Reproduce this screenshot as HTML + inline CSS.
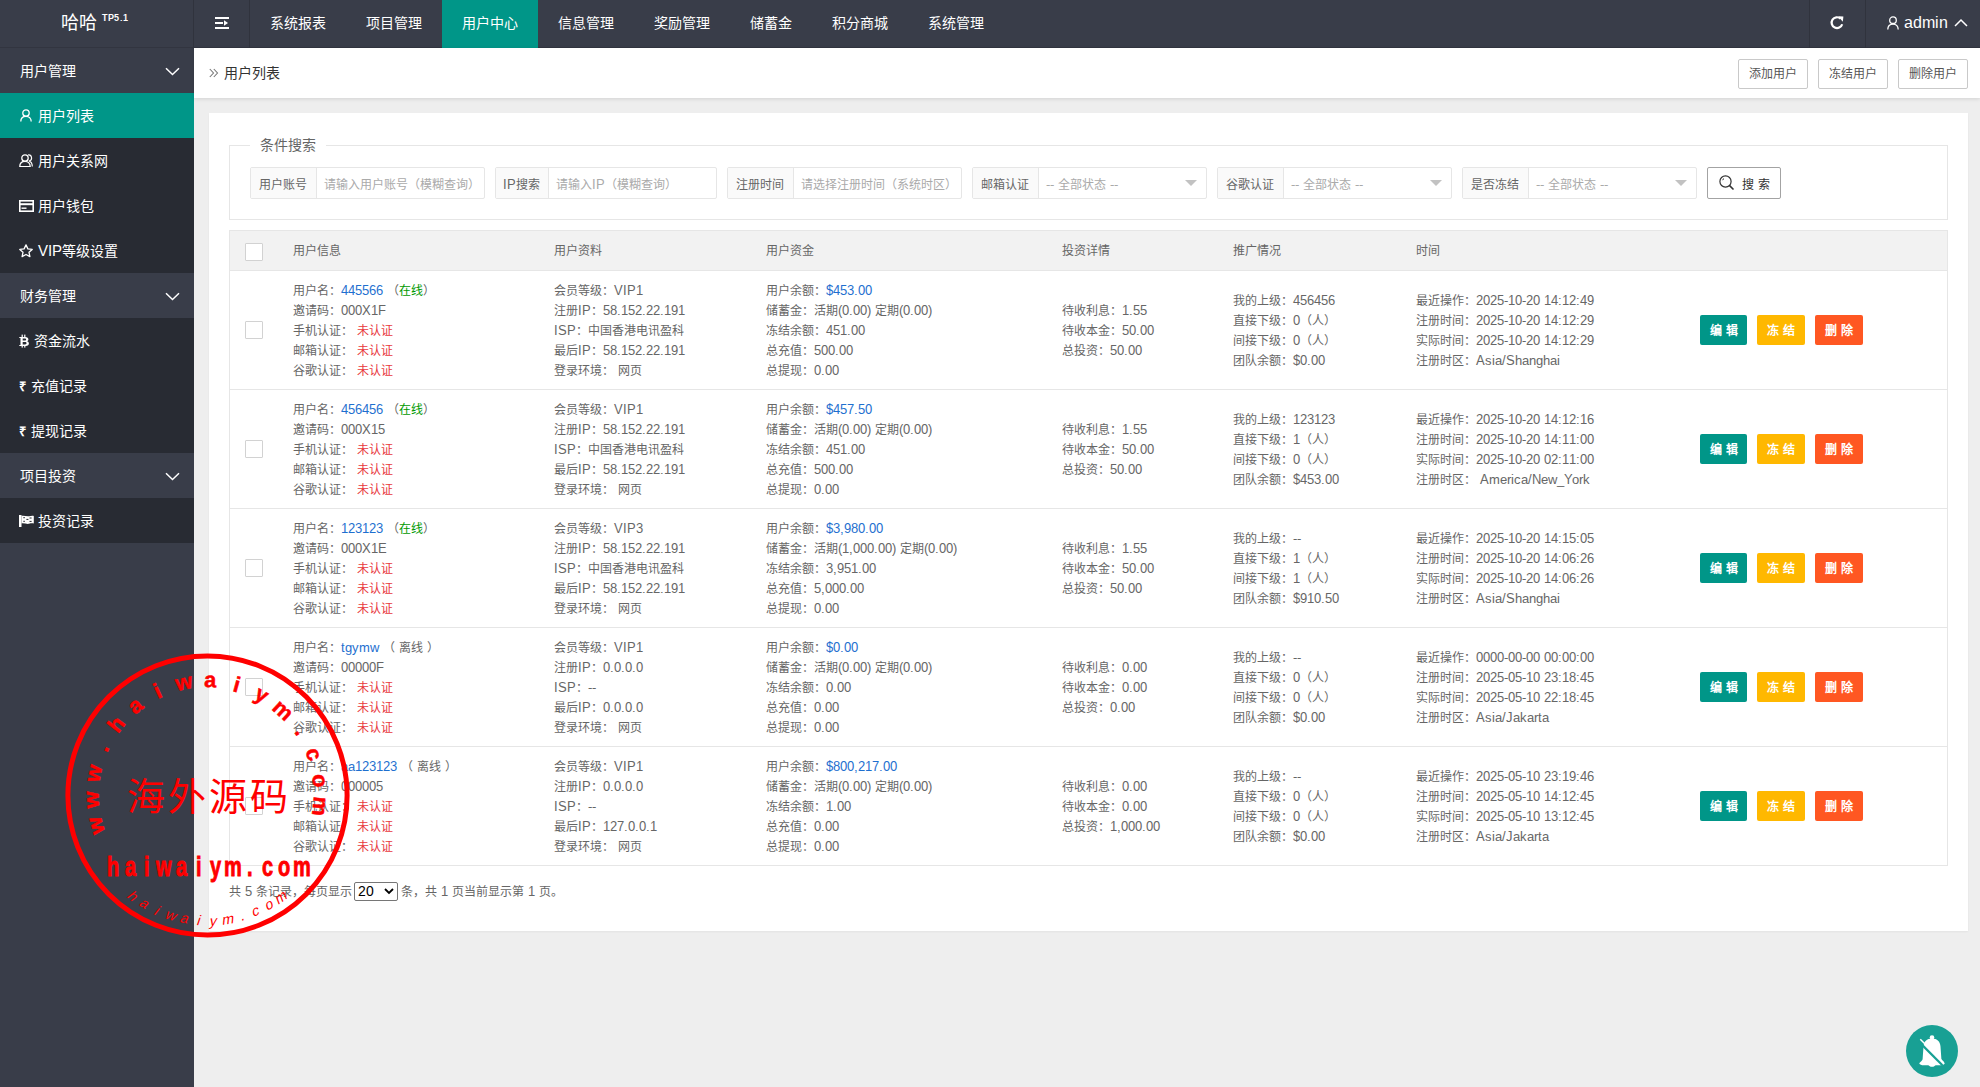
<!DOCTYPE html>
<html lang="zh-CN"><head><meta charset="utf-8"><title>用户列表</title>
<style>
@font-face{font-family:"Liberation Sans";src:local("Liberation Sans"),local("LiberationSans-Regular"),local("LiberationSans");size-adjust:106%;}
@font-face{font-family:"Liberation Sans";font-weight:bold;src:local("Liberation Sans Bold"),local("LiberationSans-Bold");size-adjust:106%;}
*{box-sizing:border-box;margin:0;padding:0}
html,body{width:1980px;height:1087px;overflow:hidden}
body{position:relative;background:#EEEEEE;font-family:"Liberation Sans",sans-serif;font-size:12px;color:#666;}
.abs{position:absolute}
/* header */
#hdr{position:absolute;left:0;top:0;width:1980px;height:48px;background:#393D49;box-shadow:inset 0 -1px 0 rgba(0,0,0,.12)}
#logo{position:absolute;left:0;top:0;width:194px;height:48px;color:#fff;}
#logo .t{position:absolute;left:61px;top:11px;font-size:18px;line-height:24px;}
#logo sup{position:absolute;left:102px;top:13px;font-size:8.5px;line-height:10px;font-weight:bold;letter-spacing:0.2px}
.tnav{position:absolute;top:0;height:48px;line-height:46px;font-size:14px;color:#fff;padding:0 20px;white-space:nowrap}
.tnav.on{background:#009688}
.vsep{position:absolute;top:0;width:1px;height:48px;background:#30333d}
/* sidebar */
#side{position:absolute;left:0;top:48px;width:194px;height:1039px;background:#393D49;}
.si{position:absolute;left:0;width:194px;height:45px;line-height:47px;font-size:14px;color:#fff;padding-left:20px;white-space:nowrap}
.si.p{background:#393D49}
.si.c{background:#282B33}
.si.on{background:#009688}
.chev{position:absolute;left:164.5px;top:18.5px;width:15px;height:9px}
/* breadcrumb */
#bc{position:absolute;left:194px;top:48px;width:1786px;height:50px;background:#fff;box-shadow:0 1px 4px rgba(0,0,0,.12)}
#bc .txt{position:absolute;left:30px;top:15px;font-size:14px;line-height:20px;color:#333}
.tbtn{position:absolute;top:11px;height:30px;width:70px;border:1px solid #C9C9C9;border-radius:2px;background:#fff;font-size:12px;line-height:28px;text-align:center;color:#555}
/* card */
#card{position:absolute;left:209px;top:113px;width:1759px;height:818px;background:#fff;box-shadow:0 1px 2px rgba(0,0,0,.05)}
#fs{position:absolute;left:229px;top:145px;width:1719px;height:75px;border:1px solid #E6E6E6}
#legend{position:absolute;left:250px;top:135px;width:76px;height:20px;background:#fff;font-size:14px;line-height:20px;color:#666;padding-left:10px}
.ig{position:absolute;top:167px;height:32px;border:1px solid #E6E6E6;border-radius:2px;background:#fff}
.ig .lb{position:absolute;left:0;top:0;height:30px;background:#FAFAFA;border-right:1px solid #E6E6E6;line-height:33px;font-size:12px;color:#666;text-align:center;padding-right:2px}
.ig .ph{position:absolute;top:0;height:30px;line-height:33px;margin-left:-1px;font-size:12px;color:#AAA;white-space:nowrap}
.ig .ar{position:absolute;top:12px;width:0;height:0;border-left:6px solid transparent;border-right:6px solid transparent;border-top:6px solid #C2C2C2}
#sbtn{position:absolute;left:1707px;top:167px;width:74px;height:32px;border:1px solid #A3A3A3;border-radius:2px;background:#fff}
/* table */
#tbl{position:absolute;left:229px;top:230px;width:1719px;height:636px;border:1px solid #E6E6E6;}
#thead{position:absolute;left:0;top:0;width:1717px;height:40px;background:#F2F2F2;border-bottom:1px solid #E6E6E6}
.th{position:absolute;top:0;line-height:39px;font-size:12px;color:#666}
.row{position:absolute;left:0;width:1717px;height:119px;border-bottom:1px solid #E6E6E6}
.row .c{position:absolute;top:1px;height:118px;display:flex;flex-direction:column;justify-content:center;line-height:20px;white-space:nowrap;font-size:12px;color:#666}
.cb{position:absolute;width:18px;height:18px;border:1px solid #D2D2D2;background:#fff;border-radius:1px}
.b{color:#1E6FCF}
.g{color:#009900}
.r{color:#E8383D}
.ops{position:absolute;left:1470px;top:44px;height:30px;white-space:nowrap}
.btn{position:absolute;top:0;height:30px;line-height:32px;font-size:12px;color:#fff;font-weight:bold;text-align:center;border-radius:2px}
.btn.teal{left:0;width:47px;background:#009688}
.btn.yel{left:57px;width:48px;background:#FFB800}
.btn.red{left:115px;width:48px;background:#FF5722}
#pg{position:absolute;left:229px;top:882px;line-height:20px;font-size:12px;color:#666;white-space:nowrap}
#sel{display:inline-block;vertical-align:top;width:44px;height:19px;border:1px solid #767676;border-radius:2px;margin:0 -1px 0 -2px;position:relative;color:#000;font-size:13px;line-height:17px;padding-left:3px;background:#fff}
#bell{position:absolute;left:1906px;top:1025px;width:52px;height:52px;border-radius:50%;background:#18A094}

</style></head><body>
<div id="hdr">
 <div id="logo"><span class="t">哈哈</span><sup>TP5.1</sup></div>
 <div class="vsep" style="left:193px"></div>
 <svg class="abs" style="left:215px;top:17px" width="15" height="12" viewBox="0 0 15 12"><rect x="0" y="0" width="14" height="2" fill="#fff"/><rect x="0" y="5" width="8" height="2" fill="#fff"/><path d="M9 3.2 L13 6 L9 8.8 Z" fill="#fff"/><rect x="0" y="10" width="14" height="2" fill="#fff"/></svg>
 <div class="vsep" style="left:249px"></div>
 <div class="tnav" style="left:250px">系统报表</div>
 <div class="tnav" style="left:346px">项目管理</div>
 <div class="tnav on" style="left:442px">用户中心</div>
 <div class="tnav" style="left:538px">信息管理</div>
 <div class="tnav" style="left:634px">奖励管理</div>
 <div class="tnav" style="left:730px">储蓄金</div>
 <div class="tnav" style="left:812px">积分商城</div>
 <div class="tnav" style="left:908px">系统管理</div>
 <div class="vsep" style="left:1809px"></div>
 <svg class="abs" style="left:1829px;top:15px" width="16" height="16" viewBox="0 0 16 16"><path d="M13.2 9.2 A5.4 5.4 0 1 1 11.6 3.6" fill="none" stroke="#fff" stroke-width="2.2"/><path d="M9.2 1.2 L14.4 1.6 L13.8 6.8 Z" fill="#fff"/></svg>
 <div class="vsep" style="left:1865px"></div>
 <svg class="abs" style="left:1887px;top:16px" width="12" height="14" viewBox="0 0 12 14"><circle cx="6" cy="4.2" r="3.3" fill="none" stroke="#fff" stroke-width="1.3"/><path d="M0.8 13.6 C0.8 10 3 8.1 6 8.1 C9 8.1 11.2 10 11.2 13.6" fill="none" stroke="#fff" stroke-width="1.3"/></svg>
 <div class="abs" style="left:1904px;top:11px;font-size:14.8px;line-height:24px;color:#fff">admin</div>
 <svg class="abs" style="left:1954px;top:18px" width="14" height="9" viewBox="0 0 14 9"><path d="M1 8 L7 2 L13 8" fill="none" stroke="#fff" stroke-width="1.5"/></svg>
</div>

<div id="side">
 <div class="si p" style="top:0">用户管理<svg class="chev" viewBox="0 0 15 9"><path d="M1 1.2 L7.5 7.5 L14 1.2" fill="none" stroke="#fff" stroke-width="1.5"/></svg></div>
 <div class="si on" style="top:45px"><svg class="abs" style="left:20px;top:16px" width="12" height="13" viewBox="0 0 12 13"><circle cx="6" cy="4" r="3.2" fill="none" stroke="#fff" stroke-width="1.3"/><path d="M0.8 12.6 C0.8 9.2 3 7.4 6 7.4 C9 7.4 11.2 9.2 11.2 12.6" fill="none" stroke="#fff" stroke-width="1.3"/></svg><span style="position:absolute;left:38px">用户列表</span></div>
 <div class="si c" style="top:90px"><svg class="abs" style="left:19px;top:16px" width="14" height="13" viewBox="0 0 14 13"><circle cx="6" cy="4" r="3.2" fill="none" stroke="#fff" stroke-width="1.3"/><path d="M0.8 12.6 C0.8 9.2 3 7.4 6 7.4 C9 7.4 11.2 9.2 11.2 12.6 Z" fill="none" stroke="#fff" stroke-width="1.3"/><path d="M9 1 A3 3 0 0 1 10 7 C12 7.6 13.3 9.5 13.3 12.6" fill="none" stroke="#fff" stroke-width="1.2"/></svg><span style="position:absolute;left:38px">用户关系网</span></div>
 <div class="si c" style="top:135px"><svg class="abs" style="left:19px;top:17px" width="15" height="12" viewBox="0 0 15 12"><rect x="0.8" y="0.8" width="13.4" height="10.4" fill="none" stroke="#fff" stroke-width="1.6"/><rect x="0.8" y="3.2" width="13.4" height="2" fill="#fff"/><rect x="2.5" y="7.5" width="5" height="1.4" fill="#fff"/></svg><span style="position:absolute;left:38px">用户钱包</span></div>
 <div class="si c" style="top:180px"><svg class="abs" style="left:19px;top:16px" width="14" height="14" viewBox="0 0 14 14"><path d="M7 0.9 L8.9 4.9 L13.2 5.4 L10 8.3 L10.9 12.6 L7 10.5 L3.1 12.6 L4 8.3 L0.8 5.4 L5.1 4.9 Z" fill="none" stroke="#fff" stroke-width="1.3" stroke-linejoin="round"/></svg><span style="position:absolute;left:38px">VIP等级设置</span></div>
 <div class="si p" style="top:225px">财务管理<svg class="chev" viewBox="0 0 15 9"><path d="M1 1.2 L7.5 7.5 L14 1.2" fill="none" stroke="#fff" stroke-width="1.5"/></svg></div>
 <div class="si c" style="top:270px"><svg class="abs" style="left:19px;top:16px" width="11" height="14" viewBox="0 0 11 14"><rect x="2.6" y="0.6" width="1.2" height="2.6" fill="#fff"/><rect x="5.2" y="0.6" width="1.2" height="2.6" fill="#fff"/><rect x="2.6" y="11" width="1.2" height="2.6" fill="#fff"/><rect x="5.2" y="11" width="1.2" height="2.6" fill="#fff"/><path fill="#fff" fill-rule="evenodd" d="M0.3 2.9 H6.3 C8.4 2.9 9.4 3.9 9.4 5.3 C9.4 6.3 8.8 7 8 7.2 C9.2 7.5 9.9 8.3 9.9 9.6 C9.9 11.1 8.8 12.1 6.7 12.1 H0.3 V10.9 H1.5 V4.1 H0.3 Z M3.7 4.5 V6.5 H5.8 C6.6 6.5 7.1 6.1 7.1 5.5 C7.1 4.9 6.6 4.5 5.8 4.5 Z M3.7 8.1 V10.4 H6.1 C7 10.4 7.5 9.9 7.5 9.25 C7.5 8.6 7 8.1 6.1 8.1 Z"/></svg><span style="position:absolute;left:34px">资金流水</span></div>
 <div class="si c" style="top:315px"><span style="position:absolute;left:19px;font-weight:bold;font-size:13px">&#8377;</span><span style="position:absolute;left:31px">充值记录</span></div>
 <div class="si c" style="top:360px"><span style="position:absolute;left:19px;font-weight:bold;font-size:13px">&#8377;</span><span style="position:absolute;left:31px">提现记录</span></div>
 <div class="si p" style="top:405px">项目投资<svg class="chev" viewBox="0 0 15 9"><path d="M1 1.2 L7.5 7.5 L14 1.2" fill="none" stroke="#fff" stroke-width="1.5"/></svg></div>
 <div class="si c" style="top:450px"><svg class="abs" style="left:19px;top:17px" width="16" height="13" viewBox="0 0 16 13"><rect x="0" y="0" width="2.5" height="12" fill="#fff"/><path d="M2.5 0.8 C5 0.2 7.5 1.6 10 1.2 C11.6 0.9 13.2 0.6 14.8 0.9 V8.5 C13.2 8.2 11.6 8.4 10 8.8 C7.5 9.3 5 7.8 2.5 8.4 Z" fill="#fff"/><path d="M4.3 2.7 H5.9 M10.5 3 H12.6 M7.4 4.4 H9.4 M4.3 6.3 H5.9 M10.5 6.4 H12.6" stroke="#282B33" stroke-width="1"/></svg><span style="position:absolute;left:38px">投资记录</span></div>
</div>

<div id="bc">
 <svg class="abs" style="left:15px;top:20px" width="10" height="10" viewBox="0 0 10 10"><path d="M0.8 1 L4.5 5 L0.8 9 M4.8 1 L8.5 5 L4.8 9" fill="none" stroke="#777" stroke-width="1.1"/></svg>
 <div class="txt">用户列表</div>
 <div class="tbtn" style="left:1544px">添加用户</div>
 <div class="tbtn" style="left:1624px">冻结用户</div>
 <div class="tbtn" style="left:1704px">删除用户</div>
</div>

<div id="card"></div>
<div id="fs"></div>
<div id="legend">条件搜索</div>

<div class="ig" style="left:250px;width:235px"><div class="lb" style="width:66px">用户账号</div><div class="ph" style="left:74px">请输入用户账号（模糊查询）</div></div>
<div class="ig" style="left:495px;width:222px"><div class="lb" style="width:53px">IP搜索</div><div class="ph" style="left:61px">请输入IP（模糊查询）</div></div>
<div class="ig" style="left:727px;width:235px"><div class="lb" style="width:66px">注册时间</div><div class="ph" style="left:74px">请选择注册时间（系统时区）</div></div>
<div class="ig" style="left:972px;width:235px"><div class="lb" style="width:66px">邮箱认证</div><div class="ph" style="left:74px">-- 全部状态 --</div><div class="ar" style="left:212px"></div></div>
<div class="ig" style="left:1217px;width:235px"><div class="lb" style="width:66px">谷歌认证</div><div class="ph" style="left:74px">-- 全部状态 --</div><div class="ar" style="left:212px"></div></div>
<div class="ig" style="left:1462px;width:235px"><div class="lb" style="width:66px">是否冻结</div><div class="ph" style="left:74px">-- 全部状态 --</div><div class="ar" style="left:212px"></div></div>
<div id="sbtn"><svg class="abs" style="left:11px;top:7px" width="16" height="16" viewBox="0 0 16 16"><circle cx="6.5" cy="6.5" r="5.6" fill="none" stroke="#333" stroke-width="1.2"/><path d="M10.6 10.6 L14.5 14.5" stroke="#333" stroke-width="1.6"/><path d="M3.6 5.2 A3.2 3.2 0 0 1 5 3.5" fill="none" stroke="#333" stroke-width="1"/></svg><span class="abs" style="left:34px;top:2px;line-height:30px;font-size:12px;color:#333;letter-spacing:4px">搜索</span></div>

<div id="tbl">
 <div id="thead">
  <div class="cb" style="left:15px;top:12px"></div>
  <div class="th" style="left:63px">用户信息</div>
  <div class="th" style="left:324px">用户资料</div>
  <div class="th" style="left:536px">用户资金</div>
  <div class="th" style="left:832px">投资详情</div>
  <div class="th" style="left:1003px">推广情况</div>
  <div class="th" style="left:1186px">时间</div>
 </div>
<div class="row" style="top:40px"><div class="cb" style="left:15px;top:50px"></div><div class="c" style="left:63px"><div>用户名：<span class="b">445566</span> （<span class="g">在线</span>）</div><div>邀请码：000X1F</div><div>手机认证： <span class="r">未认证</span></div><div>邮箱认证： <span class="r">未认证</span></div><div>谷歌认证： <span class="r">未认证</span></div></div><div class="c" style="left:324px"><div>会员等级：VIP1</div><div>注册IP：58.152.22.191</div><div>ISP：中国香港电讯盈科</div><div>最后IP：58.152.22.191</div><div>登录环境： 网页</div></div><div class="c" style="left:536px"><div>用户余额：<span class="b">$453.00</span></div><div>储蓄金：活期(0.00) 定期(0.00)</div><div>冻结余额：451.00</div><div>总充值：500.00</div><div>总提现：0.00</div></div><div class="c" style="left:832px"><div>待收利息：1.55</div><div>待收本金：50.00</div><div>总投资：50.00</div></div><div class="c" style="left:1003px"><div>我的上级：456456</div><div>直接下级：0（人）</div><div>间接下级：0（人）</div><div>团队余额：$0.00</div></div><div class="c" style="left:1186px"><div>最近操作：2025-10-20 14:12:49</div><div>注册时间：2025-10-20 14:12:29</div><div>实际时间：2025-10-20 14:12:29</div><div>注册时区：Asia/Shanghai</div></div><div class="ops"><span class="btn teal">编 辑</span><span class="btn yel">冻 结</span><span class="btn red">删 除</span></div></div>
<div class="row" style="top:159px"><div class="cb" style="left:15px;top:50px"></div><div class="c" style="left:63px"><div>用户名：<span class="b">456456</span> （<span class="g">在线</span>）</div><div>邀请码：000X15</div><div>手机认证： <span class="r">未认证</span></div><div>邮箱认证： <span class="r">未认证</span></div><div>谷歌认证： <span class="r">未认证</span></div></div><div class="c" style="left:324px"><div>会员等级：VIP1</div><div>注册IP：58.152.22.191</div><div>ISP：中国香港电讯盈科</div><div>最后IP：58.152.22.191</div><div>登录环境： 网页</div></div><div class="c" style="left:536px"><div>用户余额：<span class="b">$457.50</span></div><div>储蓄金：活期(0.00) 定期(0.00)</div><div>冻结余额：451.00</div><div>总充值：500.00</div><div>总提现：0.00</div></div><div class="c" style="left:832px"><div>待收利息：1.55</div><div>待收本金：50.00</div><div>总投资：50.00</div></div><div class="c" style="left:1003px"><div>我的上级：123123</div><div>直接下级：1（人）</div><div>间接下级：0（人）</div><div>团队余额：$453.00</div></div><div class="c" style="left:1186px"><div>最近操作：2025-10-20 14:12:16</div><div>注册时间：2025-10-20 14:11:00</div><div>实际时间：2025-10-20 02:11:00</div><div>注册时区：&nbsp;America/New_York</div></div><div class="ops"><span class="btn teal">编 辑</span><span class="btn yel">冻 结</span><span class="btn red">删 除</span></div></div>
<div class="row" style="top:278px"><div class="cb" style="left:15px;top:50px"></div><div class="c" style="left:63px"><div>用户名：<span class="b">123123</span> （<span class="g">在线</span>）</div><div>邀请码：000X1E</div><div>手机认证： <span class="r">未认证</span></div><div>邮箱认证： <span class="r">未认证</span></div><div>谷歌认证： <span class="r">未认证</span></div></div><div class="c" style="left:324px"><div>会员等级：VIP3</div><div>注册IP：58.152.22.191</div><div>ISP：中国香港电讯盈科</div><div>最后IP：58.152.22.191</div><div>登录环境： 网页</div></div><div class="c" style="left:536px"><div>用户余额：<span class="b">$3,980.00</span></div><div>储蓄金：活期(1,000.00) 定期(0.00)</div><div>冻结余额：3,951.00</div><div>总充值：5,000.00</div><div>总提现：0.00</div></div><div class="c" style="left:832px"><div>待收利息：1.55</div><div>待收本金：50.00</div><div>总投资：50.00</div></div><div class="c" style="left:1003px"><div>我的上级：--</div><div>直接下级：1（人）</div><div>间接下级：1（人）</div><div>团队余额：$910.50</div></div><div class="c" style="left:1186px"><div>最近操作：2025-10-20 14:15:05</div><div>注册时间：2025-10-20 14:06:26</div><div>实际时间：2025-10-20 14:06:26</div><div>注册时区：Asia/Shanghai</div></div><div class="ops"><span class="btn teal">编 辑</span><span class="btn yel">冻 结</span><span class="btn red">删 除</span></div></div>
<div class="row" style="top:397px"><div class="cb" style="left:15px;top:50px"></div><div class="c" style="left:63px"><div>用户名：<span class="b">tgymw</span> （ 离线 ）</div><div>邀请码：00000F</div><div>手机认证： <span class="r">未认证</span></div><div>邮箱认证： <span class="r">未认证</span></div><div>谷歌认证： <span class="r">未认证</span></div></div><div class="c" style="left:324px"><div>会员等级：VIP1</div><div>注册IP：0.0.0.0</div><div>ISP：--</div><div>最后IP：0.0.0.0</div><div>登录环境： 网页</div></div><div class="c" style="left:536px"><div>用户余额：<span class="b">$0.00</span></div><div>储蓄金：活期(0.00) 定期(0.00)</div><div>冻结余额：0.00</div><div>总充值：0.00</div><div>总提现：0.00</div></div><div class="c" style="left:832px"><div>待收利息：0.00</div><div>待收本金：0.00</div><div>总投资：0.00</div></div><div class="c" style="left:1003px"><div>我的上级：--</div><div>直接下级：0（人）</div><div>间接下级：0（人）</div><div>团队余额：$0.00</div></div><div class="c" style="left:1186px"><div>最近操作：0000-00-00 00:00:00</div><div>注册时间：2025-05-10 23:18:45</div><div>实际时间：2025-05-10 22:18:45</div><div>注册时区：Asia/Jakarta</div></div><div class="ops"><span class="btn teal">编 辑</span><span class="btn yel">冻 结</span><span class="btn red">删 除</span></div></div>
<div class="row" style="top:516px"><div class="cb" style="left:15px;top:50px"></div><div class="c" style="left:63px"><div>用户名：<span class="b">aa123123</span> （ 离线 ）</div><div>邀请码：000005</div><div>手机认证： <span class="r">未认证</span></div><div>邮箱认证： <span class="r">未认证</span></div><div>谷歌认证： <span class="r">未认证</span></div></div><div class="c" style="left:324px"><div>会员等级：VIP1</div><div>注册IP：0.0.0.0</div><div>ISP：--</div><div>最后IP：127.0.0.1</div><div>登录环境： 网页</div></div><div class="c" style="left:536px"><div>用户余额：<span class="b">$800,217.00</span></div><div>储蓄金：活期(0.00) 定期(0.00)</div><div>冻结余额：1.00</div><div>总充值：0.00</div><div>总提现：0.00</div></div><div class="c" style="left:832px"><div>待收利息：0.00</div><div>待收本金：0.00</div><div>总投资：1,000.00</div></div><div class="c" style="left:1003px"><div>我的上级：--</div><div>直接下级：0（人）</div><div>间接下级：0（人）</div><div>团队余额：$0.00</div></div><div class="c" style="left:1186px"><div>最近操作：2025-05-10 23:19:46</div><div>注册时间：2025-05-10 14:12:45</div><div>实际时间：2025-05-10 13:12:45</div><div>注册时区：Asia/Jakarta</div></div><div class="ops"><span class="btn teal">编 辑</span><span class="btn yel">冻 结</span><span class="btn red">删 除</span></div></div>
</div>

<div id="pg">共 5 条记录，每页显示 <span id="sel">20<svg class="abs" style="left:29px;top:5px" width="10" height="7" viewBox="0 0 10 7"><path d="M1 1 L5 5 L9 1" fill="none" stroke="#000" stroke-width="1.8"/></svg></span> 条，共 1 页当前显示第 1 页。</div>

<div id="bell"><svg class="abs" style="left:0;top:0" width="52" height="52" viewBox="0 0 52 52"><circle cx="26" cy="12.6" r="2.3" fill="#fff"/><path d="M26 13.6 C20.8 13.6 17.8 16.8 17.5 21.5 L16.6 34.2 C16.3 35.8 14.5 36.8 13.2 38.2 C13.9 39.7 15.6 40.2 17.6 40.2 L34.4 40.2 C36.4 40.2 38.1 39.7 38.8 38.2 C37.5 36.8 35.7 35.8 35.4 34.2 L34.5 21.5 C34.2 16.8 31.2 13.6 26 13.6 Z" fill="#fff"/><path d="M22.4 40 C23.4 41.3 24.6 41.8 26 41.8 C27.4 41.8 28.6 41.3 29.6 40 Z" fill="#fff"/><path d="M12.8 16.6 L36.4 40.2" stroke="#18A094" stroke-width="2.2"/><path d="M14.3 14.3 L37.8 37.8" stroke="#fff" stroke-width="1.5"/></svg></div>

<svg style="position:absolute;left:57px;top:645px" width="301" height="301" viewBox="57 645 301 301"><circle cx="207.5" cy="795.5" r="139.6" fill="none" stroke="#FF0000" stroke-width="5"/><text x="0" y="0" transform="translate(102.91,824.19) rotate(-105.70)" text-anchor="middle" font-family="Liberation Sans" font-weight="bold" font-size="20.5" fill="#FF0000" stroke="#FF0000" stroke-width="0.5">w</text><text x="0" y="0" transform="translate(98.98,799.32) rotate(-92.25)" text-anchor="middle" font-family="Liberation Sans" font-weight="bold" font-size="20.5" fill="#FF0000" stroke="#FF0000" stroke-width="0.5">w</text><text x="0" y="0" transform="translate(100.95,774.22) rotate(-78.80)" text-anchor="middle" font-family="Liberation Sans" font-weight="bold" font-size="20.5" fill="#FF0000" stroke="#FF0000" stroke-width="0.5">w</text><text x="0" y="0" transform="translate(108.70,750.26) rotate(-65.35)" text-anchor="middle" font-family="Liberation Sans" font-weight="bold" font-size="20.5" fill="#FF0000" stroke="#FF0000" stroke-width="0.5">.</text><text x="0" y="0" transform="translate(121.80,728.77) rotate(-51.90)" text-anchor="middle" font-family="Liberation Sans" font-weight="bold" font-size="20.5" fill="#FF0000" stroke="#FF0000" stroke-width="0.5">h</text><text x="0" y="0" transform="translate(139.55,710.91) rotate(-38.45)" text-anchor="middle" font-family="Liberation Sans" font-weight="bold" font-size="20.5" fill="#FF0000" stroke="#FF0000" stroke-width="0.5">a</text><text x="0" y="0" transform="translate(160.97,697.67) rotate(-25.00)" text-anchor="middle" font-family="Liberation Sans" font-weight="bold" font-size="20.5" fill="#FF0000" stroke="#FF0000" stroke-width="0.5">i</text><text x="0" y="0" transform="translate(184.88,689.78) rotate(-11.55)" text-anchor="middle" font-family="Liberation Sans" font-weight="bold" font-size="20.5" fill="#FF0000" stroke="#FF0000" stroke-width="0.5">w</text><text x="0" y="0" transform="translate(209.96,687.66) rotate(1.90)" text-anchor="middle" font-family="Liberation Sans" font-weight="bold" font-size="20.5" fill="#FF0000" stroke="#FF0000" stroke-width="0.5">a</text><text x="0" y="0" transform="translate(234.86,691.43) rotate(15.35)" text-anchor="middle" font-family="Liberation Sans" font-weight="bold" font-size="20.5" fill="#FF0000" stroke="#FF0000" stroke-width="0.5">i</text><text x="0" y="0" transform="translate(258.19,700.90) rotate(28.80)" text-anchor="middle" font-family="Liberation Sans" font-weight="bold" font-size="20.5" fill="#FF0000" stroke="#FF0000" stroke-width="0.5">y</text><text x="0" y="0" transform="translate(278.68,715.53) rotate(42.25)" text-anchor="middle" font-family="Liberation Sans" font-weight="bold" font-size="20.5" fill="#FF0000" stroke="#FF0000" stroke-width="0.5">m</text><text x="0" y="0" transform="translate(295.21,734.52) rotate(55.70)" text-anchor="middle" font-family="Liberation Sans" font-weight="bold" font-size="20.5" fill="#FF0000" stroke="#FF0000" stroke-width="0.5">.</text><text x="0" y="0" transform="translate(306.86,756.84) rotate(69.15)" text-anchor="middle" font-family="Liberation Sans" font-weight="bold" font-size="20.5" fill="#FF0000" stroke="#FF0000" stroke-width="0.5">c</text><text x="0" y="0" transform="translate(313.00,781.25) rotate(82.60)" text-anchor="middle" font-family="Liberation Sans" font-weight="bold" font-size="20.5" fill="#FF0000" stroke="#FF0000" stroke-width="0.5">o</text><text x="0" y="0" transform="translate(313.30,806.43) rotate(96.05)" text-anchor="middle" font-family="Liberation Sans" font-weight="bold" font-size="20.5" fill="#FF0000" stroke="#FF0000" stroke-width="0.5">m</text><text x="0" y="0" transform="translate(128.90,899.05) rotate(37.20)" text-anchor="middle" font-family="Liberation Sans" font-style="italic" font-size="13.5" fill="#FF0000">h</text><text x="0" y="0" transform="translate(141.32,907.40) rotate(30.60)" text-anchor="middle" font-family="Liberation Sans" font-style="italic" font-size="13.5" fill="#FF0000">a</text><text x="0" y="0" transform="translate(154.62,914.26) rotate(24.00)" text-anchor="middle" font-family="Liberation Sans" font-style="italic" font-size="13.5" fill="#FF0000">i</text><text x="0" y="0" transform="translate(168.62,919.55) rotate(17.40)" text-anchor="middle" font-family="Liberation Sans" font-style="italic" font-size="13.5" fill="#FF0000">w</text><text x="0" y="0" transform="translate(183.14,923.20) rotate(10.80)" text-anchor="middle" font-family="Liberation Sans" font-style="italic" font-size="13.5" fill="#FF0000">a</text><text x="0" y="0" transform="translate(197.98,925.15) rotate(4.20)" text-anchor="middle" font-family="Liberation Sans" font-style="italic" font-size="13.5" fill="#FF0000">i</text><text x="0" y="0" transform="translate(212.94,925.39) rotate(-2.40)" text-anchor="middle" font-family="Liberation Sans" font-style="italic" font-size="13.5" fill="#FF0000">y</text><text x="0" y="0" transform="translate(227.84,923.90) rotate(-9.00)" text-anchor="middle" font-family="Liberation Sans" font-style="italic" font-size="13.5" fill="#FF0000">m</text><text x="0" y="0" transform="translate(242.46,920.71) rotate(-15.60)" text-anchor="middle" font-family="Liberation Sans" font-style="italic" font-size="13.5" fill="#FF0000">.</text><text x="0" y="0" transform="translate(256.62,915.86) rotate(-22.20)" text-anchor="middle" font-family="Liberation Sans" font-style="italic" font-size="13.5" fill="#FF0000">c</text><text x="0" y="0" transform="translate(270.13,909.42) rotate(-28.80)" text-anchor="middle" font-family="Liberation Sans" font-style="italic" font-size="13.5" fill="#FF0000">o</text><text x="0" y="0" transform="translate(282.81,901.47) rotate(-35.40)" text-anchor="middle" font-family="Liberation Sans" font-style="italic" font-size="13.5" fill="#FF0000">m</text><text x="0" y="0" transform="translate(113.00,875.5) scale(0.74,1)" text-anchor="middle" font-family="Liberation Sans" font-weight="bold" font-size="25.5" fill="#FF0000" stroke="#FF0000" stroke-width="0.9">h</text><text x="0" y="0" transform="translate(130.13,875.5) scale(0.74,1)" text-anchor="middle" font-family="Liberation Sans" font-weight="bold" font-size="25.5" fill="#FF0000" stroke="#FF0000" stroke-width="0.9">a</text><text x="0" y="0" transform="translate(147.26,875.5) scale(0.74,1)" text-anchor="middle" font-family="Liberation Sans" font-weight="bold" font-size="25.5" fill="#FF0000" stroke="#FF0000" stroke-width="0.9">i</text><text x="0" y="0" transform="translate(164.39,875.5) scale(0.74,1)" text-anchor="middle" font-family="Liberation Sans" font-weight="bold" font-size="25.5" fill="#FF0000" stroke="#FF0000" stroke-width="0.9">w</text><text x="0" y="0" transform="translate(181.52,875.5) scale(0.74,1)" text-anchor="middle" font-family="Liberation Sans" font-weight="bold" font-size="25.5" fill="#FF0000" stroke="#FF0000" stroke-width="0.9">a</text><text x="0" y="0" transform="translate(198.65,875.5) scale(0.74,1)" text-anchor="middle" font-family="Liberation Sans" font-weight="bold" font-size="25.5" fill="#FF0000" stroke="#FF0000" stroke-width="0.9">i</text><text x="0" y="0" transform="translate(215.78,875.5) scale(0.74,1)" text-anchor="middle" font-family="Liberation Sans" font-weight="bold" font-size="25.5" fill="#FF0000" stroke="#FF0000" stroke-width="0.9">y</text><text x="0" y="0" transform="translate(232.91,875.5) scale(0.74,1)" text-anchor="middle" font-family="Liberation Sans" font-weight="bold" font-size="25.5" fill="#FF0000" stroke="#FF0000" stroke-width="0.9">m</text><text x="0" y="0" transform="translate(250.04,875.5) scale(0.74,1)" text-anchor="middle" font-family="Liberation Sans" font-weight="bold" font-size="25.5" fill="#FF0000" stroke="#FF0000" stroke-width="0.9">.</text><text x="0" y="0" transform="translate(267.17,875.5) scale(0.74,1)" text-anchor="middle" font-family="Liberation Sans" font-weight="bold" font-size="25.5" fill="#FF0000" stroke="#FF0000" stroke-width="0.9">c</text><text x="0" y="0" transform="translate(284.30,875.5) scale(0.74,1)" text-anchor="middle" font-family="Liberation Sans" font-weight="bold" font-size="25.5" fill="#FF0000" stroke="#FF0000" stroke-width="0.9">o</text><text x="0" y="0" transform="translate(301.43,875.5) scale(0.74,1)" text-anchor="middle" font-family="Liberation Sans" font-weight="bold" font-size="25.5" fill="#FF0000" stroke="#FF0000" stroke-width="0.9">m</text><text x="146" y="810" text-anchor="middle" font-family="Liberation Serif" font-weight="normal" font-size="38" fill="#FF0000">海</text><text x="187" y="810" text-anchor="middle" font-family="Liberation Serif" font-weight="normal" font-size="38" fill="#FF0000">外</text><text x="228" y="810" text-anchor="middle" font-family="Liberation Serif" font-weight="normal" font-size="38" fill="#FF0000">源</text><text x="269" y="810" text-anchor="middle" font-family="Liberation Serif" font-weight="normal" font-size="38" fill="#FF0000">码</text></svg>
</body></html>
